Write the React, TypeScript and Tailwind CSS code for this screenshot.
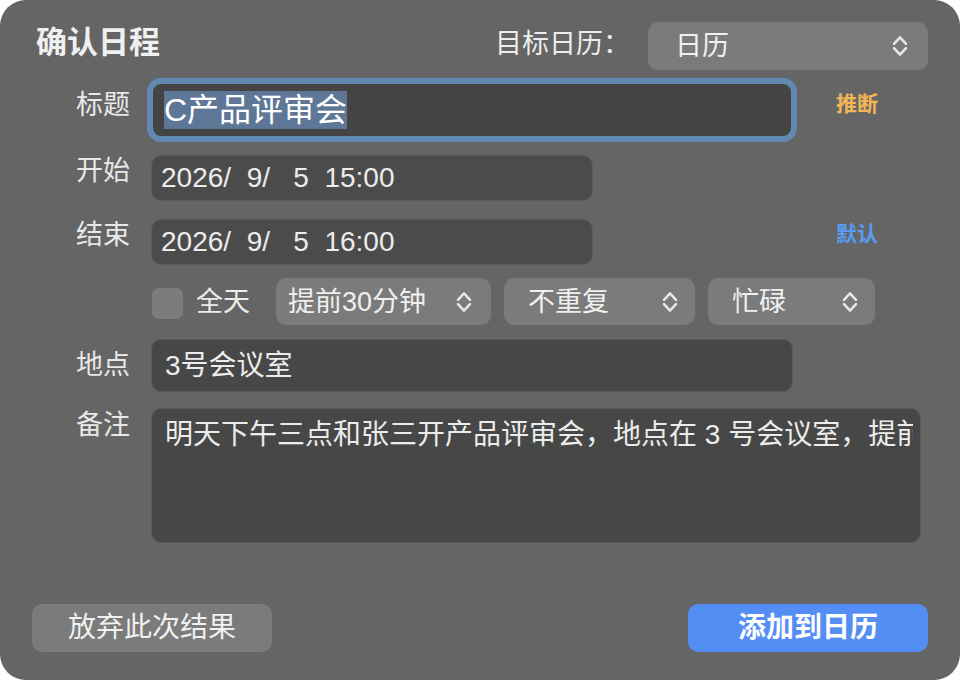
import React from "react";

const Chevrons = () => (
  <svg className="shrink-0" width="16" height="24" viewBox="0 0 16 24" fill="none" stroke="#e8e8e8" strokeWidth="2.5" strokeLinecap="round" strokeLinejoin="round">
    <path d="M2 9.8 L8 3.4 L14 9.8" />
    <path d="M2 14.2 L8 20.6 L14 14.2" />
  </svg>
);

const Label = ({ children, mt }: { children: React.ReactNode; mt: string }) => (
  <div className={`w-[98px] shrink-0 text-right text-[27px] leading-[32px] text-[#e8e8e8] ${mt}`}>{children}</div>
);

export default function App() {
  return (
    <div className="w-[960px] h-[680px] bg-white">
      <div className="w-[960px] h-[680px] rounded-[26px] bg-[#646564] px-[32px] pt-[22px] flex flex-col text-[#ececec] font-['Liberation_Sans','Noto_Sans_CJK_SC',sans-serif]">
        {/* Header */}
        <div className="flex items-center h-[48px]">
          <div className="pl-[4px] text-[31px] font-bold leading-[36px] mb-[7px] text-[#f0f0f0]">确认日程</div>
          <div className="flex-1" />
          <div className="text-[27px] leading-[32px] mb-[4px] text-[#ececec]">目标日历：</div>
          <div className="ml-[18px] w-[280px] h-[48px] rounded-[10px] bg-[#7a7b7a] flex items-center justify-between pl-[27px] pr-[20px]">
            <span className="text-[27px] leading-[32px] text-[#f0f0f0]">日历</span>
            <Chevrons />
          </div>
        </div>

        {/* Title row */}
        <div className="flex items-start mt-[12px]">
          <Label mt="mt-[7px]">标题</Label>
          <div className="ml-[21px] w-[642px] h-[56px] shrink-0 rounded-[10px] bg-[#434443] border-2 border-[#6189b2] shadow-[0_0_0_4px_#6189b2] flex items-center pl-[11px]">
            <span className="inline-block h-[38px] leading-[38px] bg-[#5e7797] text-[32px] text-white">C产品评审会</span>
          </div>
          <div className="ml-[43px] mt-[10px] text-[21px] leading-[24px] font-semibold text-[#f4b557]">推断</div>
        </div>

        {/* Start row */}
        <div className="flex items-start mt-[17px]">
          <Label mt="mt-0">开始</Label>
          <div className="ml-[21px] w-[642px] shrink-0">
            <div className="w-[442px] h-[46px] rounded-[10px] bg-[#4b4b4b] border border-[#5a5b5a] flex items-center pl-[9px]">
              <span className="text-[28px] leading-[34px] whitespace-pre text-[#ececec]">2026/  9/   5  15:00</span>
            </div>
          </div>
        </div>

        {/* End row */}
        <div className="flex items-start mt-[18px]">
          <Label mt="mt-0">结束</Label>
          <div className="ml-[21px] w-[642px] shrink-0">
            <div className="w-[442px] h-[46px] rounded-[10px] bg-[#4b4b4b] border border-[#5a5b5a] flex items-center pl-[9px]">
              <span className="text-[28px] leading-[34px] whitespace-pre text-[#ececec]">2026/  9/   5  16:00</span>
            </div>
          </div>
          <div className="ml-[43px] mt-[3px] text-[21px] leading-[24px] font-semibold text-[#5a9bf3]">默认</div>
        </div>

        {/* Options row */}
        <div className="flex items-center mt-[13px] h-[47px] pl-[119px]">
          <div className="ml-[1px] mt-[3px] w-[31px] h-[31px] rounded-[7px] bg-[#7b7c7b]" />
          <div className="ml-[13px] text-[27px] leading-[32px] text-[#ececec]">全天</div>
          <div className="ml-[26px] w-[215px] h-[47px] rounded-[10px] bg-[#7a7b7a] flex items-center justify-between pl-[12px] pr-[19px]">
            <span className="text-[27px] leading-[32px] text-[#f0f0f0]">提前30分钟</span>
            <Chevrons />
          </div>
          <div className="ml-[13px] w-[191px] h-[47px] rounded-[10px] bg-[#7a7b7a] flex items-center justify-between pl-[24px] pr-[17px]">
            <span className="text-[27px] leading-[32px] text-[#f0f0f0]">不重复</span>
            <Chevrons />
          </div>
          <div className="ml-[13px] w-[167px] h-[47px] rounded-[10px] bg-[#7a7b7a] flex items-center justify-between pl-[24px] pr-[17px]">
            <span className="text-[27px] leading-[32px] text-[#f0f0f0]">忙碌</span>
            <Chevrons />
          </div>
        </div>

        {/* Location row */}
        <div className="flex items-start mt-[14px]">
          <Label mt="mt-[10px]">地点</Label>
          <div className="ml-[21px] w-[642px] h-[53px] shrink-0 rounded-[10px] bg-[#464746] border border-[#585958] flex items-center pl-[13px]">
            <span className="text-[28px] leading-[34px] text-[#ececec]">3号会议室</span>
          </div>
        </div>

        {/* Notes row */}
        <div className="flex items-start mt-[16px]">
          <Label mt="mt-[1px]">备注</Label>
          <div className="ml-[21px] w-[770px] h-[135px] shrink-0 rounded-[10px] bg-[#464746] border border-[#585958] pl-[13px] pt-[9px]">
            <div className="mr-[7px] overflow-hidden whitespace-nowrap text-[28px] leading-[34px] text-[#ececec]">
              明天下午三点和张三开产品评审会，地点在 3 号会议室，提前
            </div>
          </div>
        </div>

        {/* Buttons */}
        <div className="flex justify-between mt-[61px]">
          <div className="w-[240px] h-[48px] rounded-[10px] bg-[#7a7b7a] flex items-center justify-center text-[28px] leading-[32px] text-[#f0f0f0]">
            放弃此次结果
          </div>
          <div className="w-[240px] h-[48px] rounded-[10px] bg-[#548ef4] flex items-center justify-center text-[28px] leading-[32px] font-semibold text-white">
            添加到日历
          </div>
        </div>
      </div>
    </div>
  );
}
